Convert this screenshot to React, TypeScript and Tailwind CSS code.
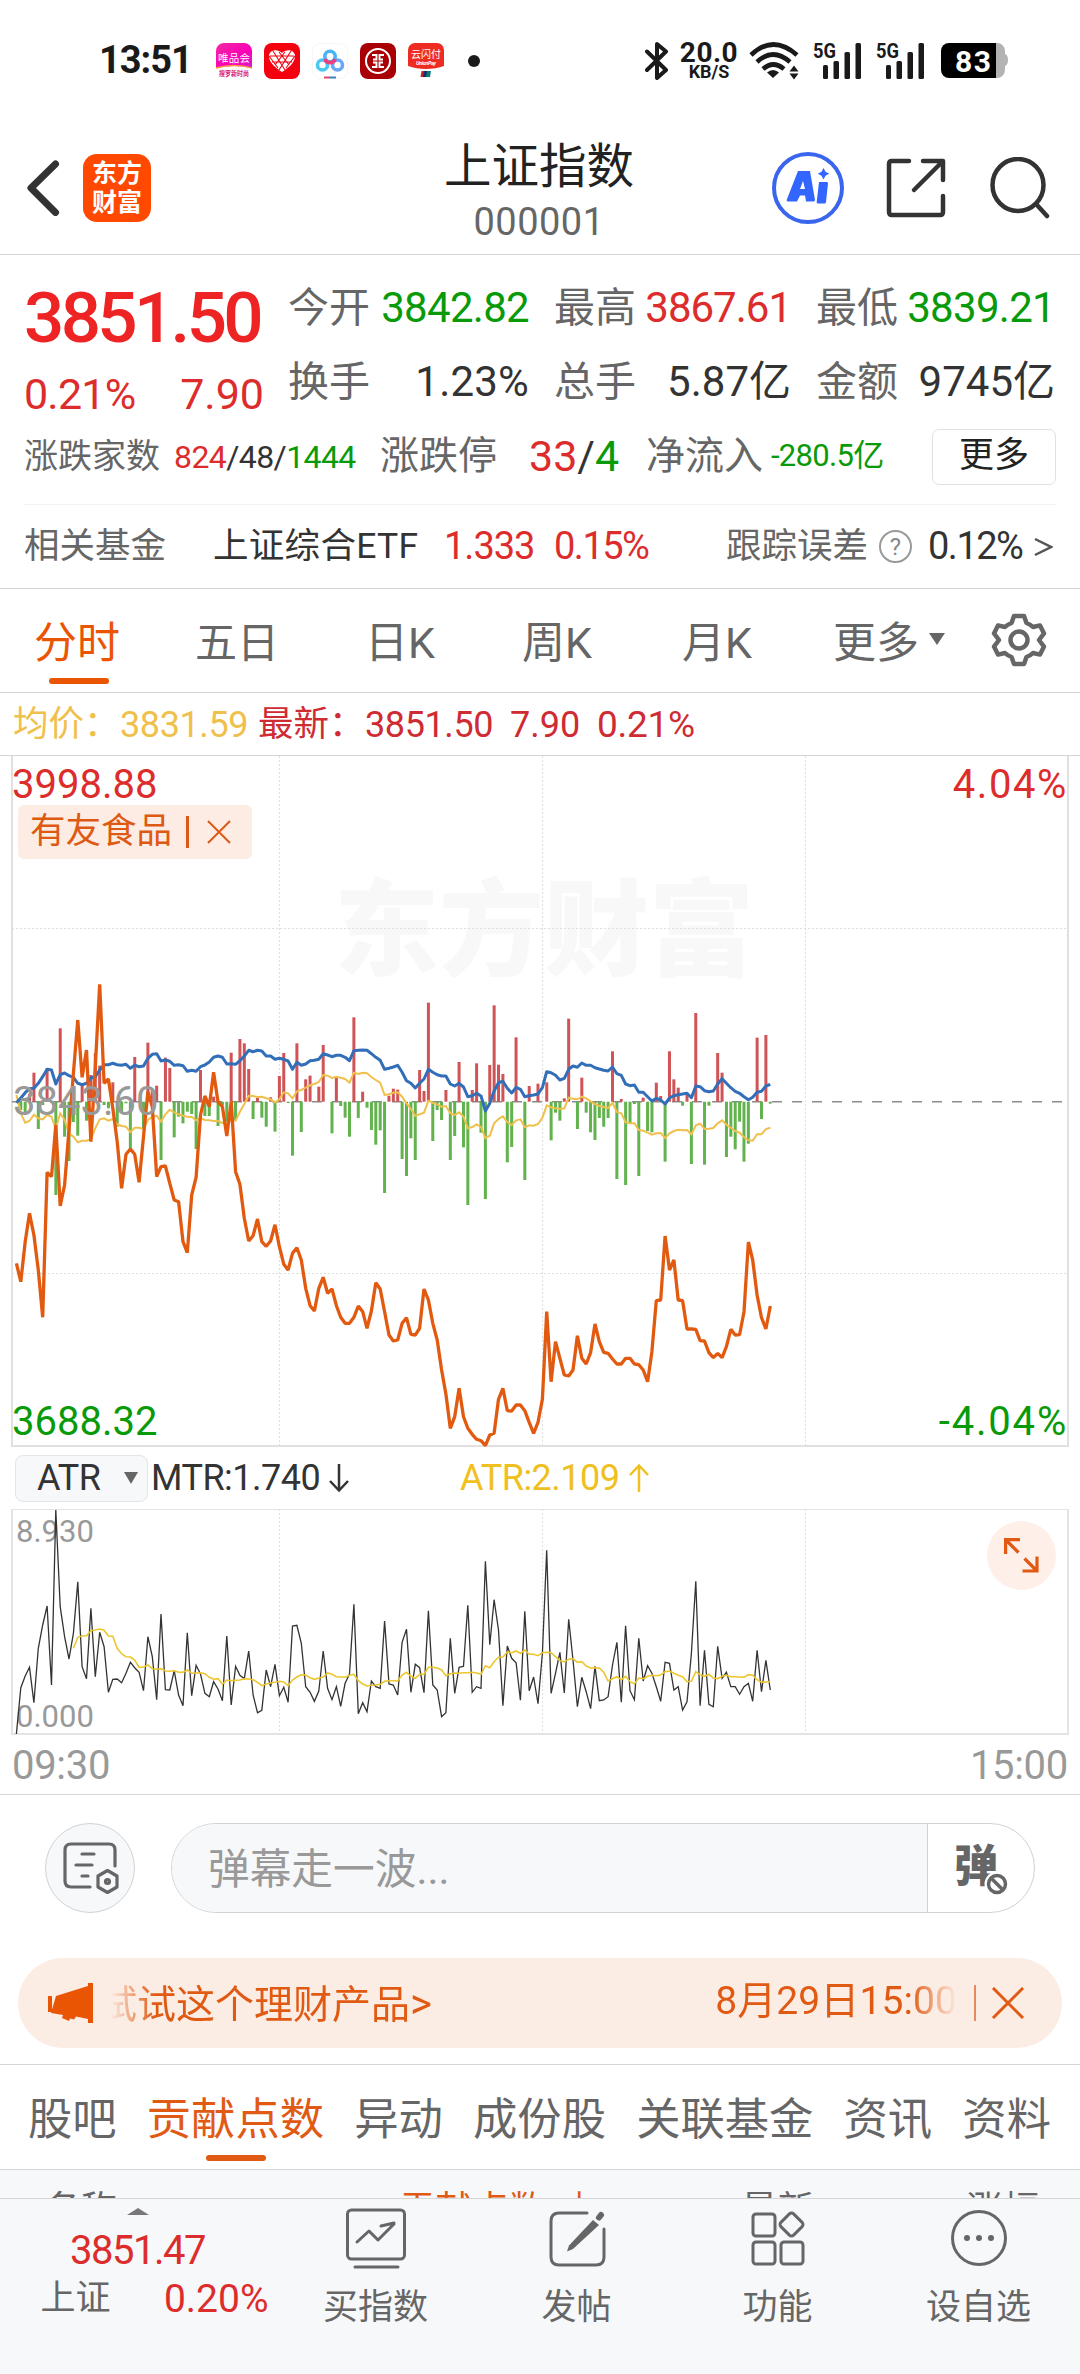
import { ReactNode } from 'react';
import clsx from 'clsx';

// One value per minute, in thirds of a pixel below the top of the plot band.
const PRICE = [
  970, 1025, 905, 820, 885, 990, 1132, 697, 710, 555, 798, 735, 570, 400, 240, 412, 330, 605, 380, 133,
  430, 417, 505, 605, 745, 643, 627, 643, 727, 590, 455, 500, 710, 680, 678, 730, 780, 785, 905, 938,
  765, 712, 525, 468, 500, 397, 485, 500, 588, 485, 695, 733, 835, 903, 887, 837, 905, 919, 903, 854,
  920, 973, 990, 940, 923, 960, 1045, 1097, 1113, 1045, 1012, 1060, 1047, 1097, 1132, 1150, 1150, 1132, 1098, 1115,
  1165, 1113, 1028, 1047, 1115, 1185, 1203, 1200, 1150, 1133, 1183, 1185, 1165, 1047, 1080, 1150, 1200, 1290, 1362, 1465,
  1430, 1345, 1430, 1465, 1483, 1498, 1502, 1517, 1485, 1480, 1378, 1345, 1412, 1413, 1395, 1395, 1412, 1447, 1480, 1447,
  1378, 1115, 1325, 1205, 1255, 1305, 1308, 1290, 1187, 1255, 1272, 1238, 1152, 1205, 1237, 1240, 1257, 1272, 1272, 1255,
  1255, 1272, 1274, 1290, 1325, 1235, 1082, 1080, 888, 990, 960, 1080, 1082, 1167, 1167, 1168, 1202, 1203, 1238, 1253,
  1240, 1253, 1220, 1168, 1185, 1184, 1115, 906, 960, 1065, 1133, 1167, 1098,
];

// Bars grow from 485: smaller is up (red), larger is down (green).
const BARS = [
  485, 510, 525, 462, 398, 567, 495, 385, 488, 765, 265, 590, 663, 546, 587, 437, 542, 405, 340, 377,
  495, 505, 427, 560, 513, 490, 625, 351, 485, 565, 308, 447, 437, 660, 353, 384, 592, 530, 550, 515,
  522, 627, 390, 528, 528, 470, 558, 495, 545, 338, 540, 297, 310, 387, 537, 473, 533, 560, 472, 575,
  408, 339, 489, 647, 310, 576, 418, 407, 485, 440, 315, 485, 580, 412, 498, 533, 590, 232, 534, 455,
  503, 570, 614, 571, 759, 467, 446, 449, 657, 708, 595, 660, 390, 453, 188, 603, 510, 540, 450, 660,
  588, 366, 622, 795, 450, 370, 578, 777, 375, 196, 374, 402, 667, 621, 292, 485, 720, 438, 485, 431,
  485, 427, 601, 518, 542, 475, 236, 485, 567, 413, 518, 577, 600, 534, 560, 534, 334, 717, 477, 735,
  550, 492, 708, 473, 573, 577, 428, 468, 665, 334, 418, 443, 497, 462, 672, 219, 485, 674, 497, 485,
  339, 398, 651, 590, 628, 545, 665, 611, 485, 293, 537, 285, 491,
];

const LATEST = [
  488, 474, 458, 446, 445, 430, 410, 388, 390, 432, 404, 399, 407, 412, 430, 434, 430, 414, 410, 390,
  374, 374, 370, 374, 376, 373, 385, 376, 380, 378, 355, 343, 341, 363, 360, 364, 376, 374, 377, 394,
  391, 394, 380, 375, 366, 352, 348, 352, 372, 371, 373, 362, 348, 331, 335, 331, 333, 348, 348, 358,
  355, 358, 363, 388, 367, 376, 372, 362, 361, 358, 341, 345, 350, 346, 346, 352, 362, 332, 331, 330,
  331, 341, 352, 361, 388, 385, 381, 376, 397, 422, 430, 444, 430, 417, 388, 397, 404, 408, 408, 432,
  438, 430, 441, 470, 467, 460, 468, 513, 490, 453, 428, 424, 445, 459, 442, 448, 470, 467, 465, 462,
  443, 395, 398, 406, 420, 415, 388, 378, 382, 369, 376, 376, 383, 387, 391, 393, 381, 401, 406, 432,
  437, 435, 457, 457, 470, 483, 475, 480, 492, 474, 467, 464, 462, 460, 473, 438, 440, 452, 455, 453,
  432, 416, 430, 443, 454, 460, 470, 479, 472, 457, 454, 438, 433,
];

const AVERAGE = [
  465, 520, 548, 543, 524, 535, 538, 525, 530, 567, 520, 540, 580, 590, 607, 602, 602, 598, 565, 538,
  535, 542, 537, 553, 558, 560, 577, 563, 563, 567, 540, 530, 527, 545, 523, 509, 517, 523, 527, 530,
  531, 541, 534, 540, 541, 543, 543, 549, 552, 540, 542, 515, 492, 467, 468, 471, 470, 475, 478, 487,
  478, 457, 460, 475, 454, 450, 443, 436, 432, 426, 405, 407, 414, 410, 413, 417, 428, 398, 402, 398,
  400, 411, 420, 428, 465, 463, 458, 457, 470, 490, 507, 527, 523, 518, 482, 488, 493, 500, 498, 520,
  525, 517, 530, 565, 561, 553, 561, 594, 587, 550, 537, 529, 546, 555, 541, 538, 562, 556, 557, 552,
  533, 496, 502, 505, 507, 505, 473, 476, 478, 470, 475, 484, 492, 498, 501, 504, 489, 516, 520, 547,
  550, 550, 570, 572, 578, 584, 580, 579, 594, 580, 573, 569, 571, 570, 583, 556, 551, 567, 566, 564,
  550, 541, 554, 563, 573, 578, 592, 600, 602, 583, 583, 567, 563,
];

const MTR = [
  882, 743, 708, 682, 788, 625, 555, 498, 735, 210, 500, 590, 657, 580, 425, 680, 716, 505, 710, 577,
  620, 757, 718, 717, 728, 700, 667, 683, 697, 752, 590, 650, 779, 522, 749, 750, 692, 765, 797, 578,
  767, 676, 702, 760, 770, 725, 747, 782, 588, 795, 679, 706, 716, 633, 765, 818, 811, 690, 740, 673,
  767, 742, 787, 558, 556, 610, 740, 757, 784, 753, 633, 745, 779, 740, 799, 730, 702, 493, 821, 788,
  815, 723, 740, 745, 543, 732, 735, 765, 607, 568, 757, 673, 683, 758, 512, 735, 750, 830, 818, 595,
  760, 682, 679, 496, 757, 740, 745, 364, 614, 479, 570, 797, 618, 655, 668, 781, 514, 752, 711, 791,
  640, 331, 760, 700, 637, 759, 538, 660, 800, 712, 755, 806, 679, 782, 780, 770, 675, 607, 787, 557,
  752, 779, 595, 723, 677, 700, 740, 784, 667, 670, 750, 740, 810, 785, 640, 424, 797, 631, 793, 800,
  619, 715, 697, 740, 740, 763, 740, 730, 784, 631, 755, 661, 750,
];

// Starts at minute 13, when the first average is available.
const ATR = [
  625, 592, 588, 587, 572, 570, 567, 571, 588, 589, 625, 641, 650, 651, 660, 682, 681, 675, 686, 688,
  686, 693, 694, 692, 697, 697, 690, 700, 699, 698, 701, 712, 718, 716, 732, 720, 722, 721, 720, 716,
  717, 719, 727, 737, 732, 729, 727, 724, 726, 737, 720, 711, 704, 705, 713, 718, 714, 711, 699, 703,
  710, 711, 712, 706, 703, 722, 732, 738, 736, 735, 733, 724, 722, 722, 723, 705, 697, 709, 715, 703,
  703, 682, 682, 684, 690, 707, 701, 699, 700, 698, 698, 697, 699, 703, 677, 683, 665, 652, 651, 636,
  638, 633, 640, 630, 643, 643, 647, 638, 637, 638, 650, 662, 665, 658, 656, 667, 665, 678, 684, 683,
  684, 697, 723, 716, 710, 719, 709, 725, 731, 714, 716, 709, 706, 707, 705, 695, 693, 700, 706, 710,
  725, 724, 695, 704, 709, 703, 714, 716, 709, 706, 710, 710, 711, 712, 704, 706, 719, 727, 726, 725,
];

const px = (i: number) => 4.4 + i * 4.383;

function toPoints(values: number[], offset: number, start = 0) {
  return values.map((v, i) => `${px(i + start).toFixed(1)},${(v / 3 + offset).toFixed(1)}`).join(' ');
}

function Stat({ label, value, color, tracking }: { label: string; value: string; color: string; tracking?: string }) {
  return (
    <div className="flex items-center justify-between whitespace-nowrap text-[41px]">
      <span className="pt-[3px] text-[#666]">{label}</span>
      <span className={clsx('pt-px text-[42px]', color, tracking)}>{value}</span>
    </div>
  );
}

function Signal() {
  return (
    <svg className="overflow-visible" width="50" height="36" viewBox="0 0 50 36" fill="#1a1a1a">
      <text x="0" y="15" fontSize="20" fontWeight="700" textLength="23" lengthAdjust="spacingAndGlyphs">5G</text>
      <rect x="10" y="22" width="5" height="14" rx="1.5" />
      <rect x="20.5" y="18" width="5.5" height="18" rx="1.5" />
      <rect x="31.5" y="9" width="5.5" height="27" rx="1.5" />
      <rect x="42.5" y="0" width="5.5" height="36" rx="1.5" />
    </svg>
  );
}

function StatusBar() {
  return (
    <div className="flex h-[121px] items-center pl-[99px] pr-[72px] text-[#1a1a1a]">
      <div className="w-[117px] text-[38px] font-bold tracking-[-1px]">13:51</div>
      <div className="flex items-center gap-3">
        <svg className="overflow-visible" width="36" height="36" viewBox="0 0 36 36">
          <defs>
            <linearGradient id="vip" x1="0" y1="0" x2="1" y2="1">
              <stop offset="0" stopColor="#f22aa0" />
              <stop offset="0.6" stopColor="#fb00b8" />
              <stop offset="1" stopColor="#d81bd0" />
            </linearGradient>
          </defs>
          <path d="M8 0h20a8 8 0 0 1 8 8v17Q18 21 0 25V8a8 8 0 0 1 8-8z" fill="url(#vip)" />
          <path d="M0 25Q18 20 36 25" fill="none" stroke="#ff9a3c" strokeWidth="1.5" />
          <text x="2" y="18.5" fontSize="10.5" fontWeight="400" fill="#fff" textLength="32">唯品会</text>
          <text x="3" y="33" fontSize="6.5" fontWeight="700" fill="#d6246e" textLength="30" lengthAdjust="spacingAndGlyphs">搜罗新时尚</text>
        </svg>
        <svg width="36" height="36" viewBox="0 0 36 36">
          <rect width="36" height="36" rx="8" fill="#f5000f" />
          <path d="M18 29C12 25 5 20 5 13c0-6 8-8 13-3 5-5 13-3 13 3 0 7-7 12-13 16z" fill="#fff" />
          <path d="M5 13l9 12M9 8l12 19M15 9l10 13M31 13l-9 12M27 8L15 27M21 9L11 22M6 13h24M8 19h20" stroke="#f5000f" strokeWidth="1.1" />
        </svg>
        <svg width="36" height="36" viewBox="0 0 36 36" fill="none" strokeWidth="3.6">
          <rect x="0.5" y="0.5" width="35" height="35" rx="8" stroke="#f6f6f6" strokeWidth="1" />
          <circle cx="10.5" cy="22" r="5" stroke="#4cc9f2" />
          <circle cx="25.5" cy="22" r="5" stroke="#6aa8f5" />
          <circle cx="18" cy="13.5" r="5.2" stroke="#49b4f5" />
          <path d="M13 16a5.2 5.2 0 0 0 10 0" stroke="#ee3f7c" />
          <path d="M12 34.5h6" stroke="#e8476a" strokeWidth="2" />
          <path d="M18 34.5h6" stroke="#3b83c8" strokeWidth="2" />
        </svg>
        <svg width="36" height="36" viewBox="0 0 36 36" fill="none" stroke="#fff">
          <rect width="36" height="36" rx="8" fill="#a90005" stroke="none" />
          <circle cx="18" cy="18" r="12" strokeWidth="2" />
          <path d="M12 12h4.5v4.5H13M12 24h4.500v-4.500H13M24 12h-4.500v4.500H23M24 24h-4.500v-4.500H23" strokeWidth="1.9" />
        </svg>
        <svg className="overflow-visible" width="36" height="36" viewBox="0 0 36 36">
          <path d="M7 0h22a7 7 0 0 1 7 7v16q-8 3-18 3T0 23V7a7 7 0 0 1 7-7z" fill="#ee2c24" />
          <text x="3" y="15" fontSize="10" fontWeight="400" fill="#fff" textLength="30">云闪付</text>
          <text x="8" y="22" fontSize="5.5" fontWeight="700" fontStyle="italic" fill="#fff" textLength="20">UnionPay</text>
          <path d="M13.5 28h4l-1 6h-4z" fill="#c8202c" />
          <path d="M16 28h4l-1 6h-4z" fill="#12306b" />
          <path d="M19 28h4l-1 6h-4z" fill="#0d7a78" />
        </svg>
      </div>
      <div className="ml-6 size-3 rounded-full bg-[#1a1a1a]" />

      <div className="ml-auto flex items-center">
        <svg width="24" height="38" viewBox="0 0 24 38" fill="none" stroke="#1a1a1a" strokeWidth="4" strokeLinejoin="round" strokeLinecap="round">
          <path d="M2 9.5L21 28 12 36V2l9 7.5L2 28" />
        </svg>
        <div className="ml-[10px] flex w-[60px] flex-col items-center font-bold">
          <span className="text-[28px] leading-[22px] tracking-[0.5px]">20.0</span>
          <span className="text-[18px] leading-[16px]">KB/S</span>
        </div>
        <svg className="ml-[10px]" width="52" height="38" viewBox="0 0 52 38" fill="none" stroke="#1a1a1a" strokeWidth="4.6">
          <path d="M2 13Q24-8 48 13" />
          <path d="M8 20Q24 5 41 20" />
          <path d="M14 27Q24 18 35 27" />
          <path d="M24 36l-6-5.5q6-5 12 0z" fill="#1a1a1a" stroke="none" />
          <path d="M40.5 29.5l4.5-6 4.5 6zM40.5 31.5l4.5 6 4.5-6z" fill="#1a1a1a" stroke="none" />
        </svg>
        <div className="ml-3 flex gap-[13px]">
          <Signal />
          <Signal />
        </div>
        <svg className="ml-[15px]" width="67" height="35" viewBox="0 0 67 35">
          <path d="M54 0h2a8 8 0 0 1 8 8v3q3 1 3 6t-3 6v4a8 8 0 0 1-8 8h-2z" fill="#b3b3b3" />
          <path d="M8 0h47v35H8a8 8 0 0 1-8-8V8a8 8 0 0 1 8-8z" fill="#000" />
          <text x="14" y="28.5" fontSize="30" fontWeight="700" fill="#fff" textLength="36">83</text>
        </svg>
      </div>
    </div>
  );
}

function Header() {
  return (
    <div className="flex h-[134px] items-center border-b border-[#d6d6d6] pl-[26px] pr-[30px]">
      <div className="flex w-[413px] items-center">
        <svg width="34" height="56" viewBox="0 0 34 56" fill="none" stroke="#333" strokeWidth="7" strokeLinecap="round" strokeLinejoin="round">
          <path d="M29.5 4L5 28l24.5 24.5" />
        </svg>
        <div className="ml-[23px] flex size-[68px] flex-col items-center justify-center rounded-[14px] bg-[#ff4800] text-[25px] font-bold leading-[29px] text-white">
          <span>东方</span>
          <span>财富</span>
        </div>
      </div>
      <div className="flex w-[200px] flex-col items-center">
        <div className="whitespace-nowrap pt-1 text-[47.5px] leading-[64px] text-[#222]">上证指数</div>
        <div className="text-[38px] leading-[46px] tracking-[0.5px] text-[#666]">000001</div>
      </div>
      <div className="ml-auto flex items-center">
        <svg width="72" height="74" viewBox="0 0 72 74">
          <circle cx="36" cy="37" r="34" fill="none" stroke="#3a66ee" strokeWidth="4" />
          <path d="M26 20h12l5 29q0 1.5-2 1.5h-7l-1-6h-5l-3 6h-9q-2 0-1-2.5zM31 30l-3 8h5z" fill="#3366ff" fillRule="evenodd" />
          <path d="M47 31h8q1 0 1 1.5L54 51q0 1.5-1.5 1.5h-6.500q-1.500 0-1.300-1.500z" fill="#3366ff" />
          <path d="M51.5 17l2 3.700 3.700 2-3.700 2-2 3.700-2-3.700-3.700-2 3.700-2z" fill="#3366ff" />
        </svg>
        <svg className="ml-[42px]" width="60" height="60" viewBox="0 0 60 60" fill="none" stroke="#333" strokeWidth="4.5" strokeLinecap="round" strokeLinejoin="round">
          <path d="M23 3H6q-3 0-3 3v48q0 3 3 3h48q3 0 3-3V38M37 3h20v19M56 4L28 32" />
        </svg>
        <svg className="ml-11" width="60" height="62" viewBox="0 0 60 62" fill="none" stroke="#333" strokeWidth="4.5" strokeLinecap="round">
          <ellipse cx="28" cy="28" rx="25.5" ry="26" />
          <path d="M47 48l10 11" />
        </svg>
      </div>
    </div>
  );
}

function Quote() {
  return (
    <div className="h-[334px] border-b border-[#d6d6d6] px-6 pt-[15px]">
      <div className="flex h-[148px]">
        <div className="w-[264px] text-[#dc2c2c]">
          <div className="h-[96px] text-[71px] font-medium leading-[96px] tracking-[-3.7px] text-[#ee2424]">3851.50</div>
          <div className="flex w-[240px] justify-between text-[43px] leading-[56px]">
            <span className="tracking-[-0.8px]">0.21%</span>
            <span>7.90</span>
          </div>
        </div>
        <div className="grid grid-cols-[241px_237px_239px] grid-rows-2 gap-x-[25px]">
          <Stat label="今开" value="3842.82" color="text-[#099a09]" tracking="tracking-[-0.7px]" />
          <Stat label="最高" value="3867.61" color="text-[#dc2c2c]" tracking="tracking-[-1px]" />
          <Stat label="最低" value="3839.21" color="text-[#099a09]" tracking="tracking-[-0.7px]" />
          <Stat label="换手" value="1.23%" color="text-[#333]" tracking="tracking-[0.2px]" />
          <Stat label="总手" value="5.87亿" color="text-[#333]" />
          <Stat label="金额" value="9745亿" color="text-[#333]" />
        </div>
      </div>
      <div className="flex h-[87px] items-center whitespace-nowrap border-b border-[#f2f2f2] pb-[9px] text-[39px] text-[#666]">
        <div className="w-[150px] text-[34px]">涨跌家数</div>
        <div className="w-[206px] text-[32px] tracking-[-0.6px] text-[#333]">
          <span className="text-[#dc2c2c]">824</span>/48/<span className="text-[#099a09]">1444</span>
        </div>
        <div className="w-[149px]">涨跌停</div>
        <div className="w-[117px] text-[43px] text-[#333]">
          <span className="text-[#dc2c2c]">33</span>/<span className="text-[#099a09]">4</span>
        </div>
        <div className="w-[125px]">净流入</div>
        <div className="text-[31px] tracking-[-0.7px] text-[#099a09]">-280.5亿</div>
        <div className="ml-auto flex h-[56px] w-[124px] items-center justify-center rounded-[7px] border border-[#dfe2e5] text-[35px] text-[#222]">更多</div>
      </div>
      <div className="flex h-[81px] items-center whitespace-nowrap pt-0.5 text-[35.5px] text-[#333]">
        <div className="w-[189px] text-[#666]">相关基金</div>
        <div className="w-[231px] tracking-[0.3px]">上证综合ETF</div>
        <div className="w-[110px] text-[38px] tracking-[-1px] text-[#dc2c2c]">1.333</div>
        <div className="w-[172px] text-[38px] tracking-[-1.5px] text-[#dc2c2c]">0.15%</div>
        <div className="text-[#666]">跟踪误差</div>
        <div className="ml-[11px] flex size-[33px] items-center justify-center rounded-full border-[2.5px] border-[#999] text-[24px] text-[#888]">?</div>
        <div className="ml-4 text-[38px] tracking-[-1.5px]">0.12%</div>
        <svg className="ml-auto mr-[3px]" width="19" height="20" viewBox="0 0 19 20" fill="none" stroke="#555" strokeWidth="2.5">
          <path d="M1 2l16 8-16 8" />
        </svg>
      </div>
    </div>
  );
}

function PeriodTabs() {
  return (
    <div className="flex h-[104px] items-center whitespace-nowrap border-b border-[#d6d6d6] pl-[34px] text-[43px] text-[#666]">
      <div className="relative w-[161px] pt-[6px] text-[#ea5504]">
        分时
        <div className="absolute -bottom-[8px] left-[15px] h-[6px] w-[60px] rounded-full bg-[#ea5504]" />
      </div>
      <div className="w-[170px] pt-[6px] text-[42px]">五日</div>
      <div className="w-[157px] pt-[6px]">日K</div>
      <div className="w-[160px] pt-[6px]">周K</div>
      <div className="w-[151px] pt-[6px]">月K</div>
      <div className="w-[96px] pt-[6px]">更多</div>
      <div className="mb-1 h-0 w-0 border-x-[8px] border-t-[12px] border-x-transparent border-t-[#666]" />
      <svg className="mb-0.5 ml-[46px]" width="56" height="54" viewBox="0 0 56 54" fill="none" stroke="#666" strokeWidth="4.5" strokeLinejoin="round">
        <path d="M23 3h10l2.500 7q4 1.500 6.500 4l7-1.600 4 8-5 6.600 5 6.600-4 8-7-1.600q-2.500 2.500-6.500 4L33 51H23l-2.500-7q-4-1.500-6.500-4l-7 1.600-4-8L8 27l-5-6.600 4-8 7 1.600q2.500-2.500 6.500-4z" />
        <circle cx="28" cy="27" r="8.5" />
      </svg>
    </div>
  );
}

function Grid({ height, lines }: { height: number; lines: number[] }) {
  return (
    <g stroke="#dedede" strokeWidth="1" strokeDasharray="2 2">
      {[267.5, 530.5, 793.5].map((x) => (
        <line key={x} x1={x} x2={x} y1="0" y2={height} />
      ))}
      {lines.map((y) => (
        <line key={y} x1="0" x2="1056" y1={y} y2={y} />
      ))}
    </g>
  );
}

function MinuteChart() {
  const zero = 345.7;
  return (
    <div className="relative mx-[11px] h-[691px] border-x-2 border-b-2 border-[#e0e0e0] text-[40px] leading-none">
      <div className="absolute left-[321px] top-[123px] whitespace-nowrap text-[105px] font-black text-[#f8f8f8]">东方财富</div>
      <svg className="absolute -left-px top-0 overflow-visible" width="1056" height="690" viewBox="0 0 1056 690" fill="none">
        <Grid height={690} lines={[172.5, 517.5]} />
        <line x1="0" x2="1056" y1={zero} y2={zero} stroke="#8c8c8c" strokeWidth="1.5" strokeDasharray="10 10" />
        {BARS.map((v, i) => {
          const y = v / 3 + 184;
          return (
            <rect
              key={i}
              x={px(i) - 1.5}
              width="3"
              y={Math.min(y, zero)}
              height={Math.abs(y - zero)}
              fill={y < zero ? '#d05355' : '#62b24e'}
            />
          );
        })}
        <polyline points={toPoints(AVERAGE, 184)} stroke="#f0c04c" strokeWidth="2" />
        <polyline points={toPoints(LATEST, 184)} stroke="#326fb8" strokeWidth="3" strokeLinejoin="round" />
        <polyline points={toPoints(PRICE, 184)} stroke="#e25a10" strokeWidth="3.3" strokeLinejoin="bevel" />
      </svg>
      <div className="absolute -left-px top-[9px] text-[#dc2c2c]">3998.88</div>
      <div className="absolute -right-px top-[9px] tracking-[1.6px] text-[#dc2c2c]">4.04%</div>
      <div className="absolute left-[5px] top-[49px] flex h-[54px] w-[234px] items-center rounded-md bg-[#fdece3] pl-3 text-[35.5px] text-[#dd5a14]">
        <span className="w-[156px] whitespace-nowrap">有友食品</span>
        <span className="h-8 w-[3px] bg-[#dd5a14]" />
        <svg className="ml-[18px]" width="24" height="24" viewBox="0 0 24 24" stroke="#dd5a14" strokeWidth="2">
          <path d="M1 1l22 22M23 1L1 23" />
        </svg>
      </div>
      <div className="absolute left-0 top-[326px] text-[#999]">3843.60</div>
      <div className="absolute -left-px top-[646px] text-[#099a09]">3688.32</div>
      <div className="absolute -right-px top-[646px] tracking-[1.8px] text-[#099a09]">-4.04%</div>
    </div>
  );
}

function Arrow({ color, up }: { color: string; up?: boolean }) {
  return (
    <svg className={clsx('ml-2', up && 'rotate-180')} width="22" height="30" viewBox="0 0 22 30" fill="none" stroke={color} strokeWidth="2.5">
      <path d="M11 1v26M2 18l9 9.500 9-9.500" />
    </svg>
  );
}

function AtrChart() {
  return (
    <>
      <div className="flex h-[62px] items-center pl-[15px] text-[36px] tracking-[-0.5px] text-[#333]">
        <div className="flex h-[47px] w-[133px] items-center rounded-lg border border-[#e3e5e9] bg-[#f7f8fa] pl-[21px]">
          ATR
          <span className="ml-auto mr-[9px] h-0 w-0 border-x-[7.5px] border-t-[12px] border-x-transparent border-t-[#666]" />
        </div>
        <div className="flex w-[312px] items-center pl-[3px]">
          MTR:1.740
          <Arrow color="#333" />
        </div>
        <div className="flex items-center text-[#f0c020]">
          ATR:2.109
          <Arrow color="#f0c020" up />
        </div>
      </div>
      <div className="relative mx-[11px] h-[226px] border-2 border-t border-[#e4e4e4] text-[31px] leading-none text-[#999]">
        <div className="absolute left-[3px] top-[6px]">8.930</div>
        <div className="absolute left-[3px] top-[191px]">0.000</div>
        <svg className="absolute -left-px -top-px overflow-visible" width="1056" height="225" viewBox="0 0 1056 225" fill="none">
          <Grid height={225} lines={[]} />
          <polyline points={toPoints(MTR, -69)} stroke="#333" strokeWidth="1.3" />
          <polyline points={toPoints(ATR, -69, 13)} stroke="#ecc62c" strokeWidth="1.6" />
        </svg>
        <div className="absolute right-[11px] top-[11px] flex size-[69px] items-center justify-center rounded-full bg-[#fef0e9]">
          <svg width="35" height="35" viewBox="0 0 35 35" fill="none" stroke="#e05a14" strokeWidth="3.2">
            <path d="M1.600 16V1.600H16M2 2l12.500 12.500M33 18.500V33H18.500M33 33L20.500 20.500" />
          </svg>
        </div>
      </div>
      <div className="flex h-[60px] items-center justify-between border-b border-[#d6d6d6] px-3 pt-0.5 text-[40px] tracking-[-0.3px] text-[#999]">
        <span>09:30</span>
        <span>15:00</span>
      </div>
    </>
  );
}

function Danmu() {
  return (
    <div className="flex items-center pl-[45px] pt-7">
      <div className="flex size-[90px] items-center justify-center rounded-full border border-[#cfd2d6] bg-[#f7f8fa]">
        <svg width="58" height="54" viewBox="0 0 58 54" fill="none" stroke="#666" strokeWidth="3.2" strokeLinecap="round">
          <path d="M29 46H10q-6 0-6-6V9q0-6 6-6h38q6 0 6 6v16M21 13h12M15 24h16M21 35h6" />
          <path d="M46.500 29.500l9.500 5.500v11l-9.500 5.500L37 46V35z" strokeLinejoin="round" />
          <circle cx="46.5" cy="40.5" r="2" />
        </svg>
      </div>
      <div className="ml-9 flex h-[90px] w-[864px] overflow-hidden rounded-full border border-[#cfd2d6]">
        <div className="flex-1 border-r border-[#cfd2d6] bg-[#f7f8fa] pl-9 pt-0.5 text-[41.7px] leading-[88px] text-[#999]">弹幕走一波...</div>
        <div className="relative w-[106px] pl-[26px] text-[44px] font-black leading-[87px] text-[#666]">
          弹
          <svg className="absolute left-[56px] top-[47px]" width="26" height="26" viewBox="0 0 26 26" fill="none" stroke="#666" strokeWidth="3.5">
            <circle cx="13" cy="13" r="11.5" fill="#fff" stroke="#fff" strokeWidth="2" />
            <circle cx="13" cy="13" r="8.5" />
            <path d="M8 8l10 10" />
          </svg>
        </div>
      </div>
    </div>
  );
}

function Banner() {
  return (
    <div className="mx-[18px] mt-[45px] flex h-[90px] items-center rounded-full bg-[#fcede4] pl-[30px] text-[39px] text-[#e05a14]">
      <svg width="46" height="40" viewBox="0 0 46 40" fill="#ea5504">
        <path d="M0 13h4v16H0zM8 13L40 3V0h5v40h-5v-4l-12-2.500-2 3-4-1-1 2.500-7-3 1-3-12-2z" />
      </svg>
      <div className="ml-4 flex w-[847px] justify-between overflow-hidden whitespace-nowrap [mask-image:linear-gradient(to_right,transparent,black_45px,black_800px,transparent)]">
        <span className="-ml-3">
          试试这个理财产品<span className="text-[42px]">&gt;</span>
        </span>
        <span className="tracking-[0.1px]">8月29日15:00</span>
      </div>
      <div className="ml-[17px] h-9 w-[2px] bg-[#e58a5c]" />
      <svg className="ml-[15px]" width="34" height="32" viewBox="0 0 34 32" stroke="#e05a14" strokeWidth="3">
        <path d="M2 1l30 30M32 1L2 31" />
      </svg>
    </div>
  );
}

const sections = ['股吧', '贡献点数', '异动', '成份股', '关联基金', '资讯', '资料'];

function Sections() {
  return (
    <>
      <div className="mt-4 flex h-[106px] items-center justify-between whitespace-nowrap border-y border-[#d6d6d6] pl-[28px] pr-[29px] text-[44.3px] text-[#666]">
        {sections.map((name) => (
          <div key={name} className={clsx('relative pt-[6px]', name === '贡献点数' && 'text-[#e05a14]')}>
            {name}
            {name === '贡献点数' && (
              <div className="absolute -bottom-[8px] left-[59px] h-[6px] w-[60px] rounded-full bg-[#e05a14]" />
            )}
          </div>
        ))}
      </div>
      <div className="flex h-[28px] items-start overflow-hidden whitespace-nowrap bg-[#f7f8fa] pl-[44px] pt-[20px] text-[36.5px] leading-[40px] text-[#666]">
        <div className="w-[355px]">名称</div>
        <div className="w-[342px] text-[#e05a14]">贡献点数<span className="ml-4">↓</span></div>
        <div className="w-[225px]">最新</div>
        <div>涨幅</div>
      </div>
    </>
  );
}

function BarItem({ label, children }: { label: string; children: ReactNode }) {
  return (
    <div className="flex w-[201px] flex-col items-center">
      <div className="flex h-[80px] items-center">{children}</div>
      <div className="pt-[5px] text-[35px] leading-[48px]">{label}</div>
    </div>
  );
}

function BottomBar() {
  return (
    <div className="flex h-[176px] whitespace-nowrap border-t border-[#d6d6d6] bg-[#f7f8fa] text-[#666]">
      <div className="flex w-[275px] flex-col items-center pt-[9px]">
        <div className="h-0 w-0 border-x-[11px] border-b-[7px] border-x-transparent border-b-[#77777c]" />
        <div className="mt-[12px] text-[40px] leading-[48px] tracking-[-1.5px] text-[#dc2c2c]">3851.47</div>
        <div className="ml-[34px] flex w-[228px] items-center justify-between text-[35px] leading-[48px]">
          <span>上证</span>
          <span className="text-[39px] text-[#dc2c2c]">0.20%</span>
        </div>
      </div>
      <BarItem label="买指数">
        <svg width="62" height="66" viewBox="0 0 62 66" fill="none" stroke="#666" strokeWidth="3" strokeLinecap="round" strokeLinejoin="round">
          <rect x="2.5" y="4" width="57" height="49" rx="4" />
          <path d="M12 36l12-11 9 9 16-16M36 20l13-3M10 61h43" />
        </svg>
      </BarItem>
      <BarItem label="发帖">
        <svg width="58" height="62" viewBox="0 0 58 62" fill="none" stroke="#666" strokeWidth="3" strokeLinecap="round">
          <path d="M39 5H11Q3 5 3 13v36q0 8 8 8h37q8 0 8-8V21" />
          <path d="M45 12l6 5-26 24-6 2.500 2-6z" fill="#666" stroke="none" />
          <path d="M51 9.500l2-2.500" strokeWidth="6" />
        </svg>
      </BarItem>
      <BarItem label="功能">
        <svg width="56" height="58" viewBox="0 0 56 58" fill="none" stroke="#666" strokeWidth="3">
          <rect x="3" y="4" width="22" height="22" rx="3" />
          <rect x="3" y="32" width="22" height="22" rx="3" />
          <rect x="31" y="32" width="22" height="22" rx="3" />
          <rect x="32.5" y="5.5" width="18" height="18" rx="3" transform="rotate(45 41.500 14.500)" />
        </svg>
      </BarItem>
      <BarItem label="设自选">
        <svg width="58" height="60" viewBox="0 0 58 60" fill="#666">
          <circle cx="29" cy="29" r="26.5" fill="none" stroke="#666" strokeWidth="3" />
          <circle cx="17" cy="29" r="3" />
          <circle cx="29" cy="29" r="3" />
          <circle cx="41" cy="29" r="3" />
        </svg>
      </BarItem>
    </div>
  );
}

export default function App() {
  return (
    <div className="h-[2374px] w-[1080px] overflow-hidden bg-white font-['Roboto','Noto_Sans_CJK_SC',sans-serif]">
      <StatusBar />
      <Header />
      <Quote />
      <PeriodTabs />
      <div className="flex h-[63px] items-center whitespace-nowrap border-b border-[#d6d6d6] pl-[13px] pt-0.5 text-[35.5px] text-[#cf2b33]">
        <div className="w-[107px] text-[#f0c04c]">均价：</div>
        <div className="w-[138px] text-[36px] tracking-[-0.4px] text-[#f0c04c]">3831.59</div>
        <div className="w-[107px]">最新：</div>
        <div className="w-[145px] text-[36px] tracking-[-0.4px]">3851.50</div>
        <div className="w-[87px] text-[36px]">7.90</div>
        <div className="text-[37px] tracking-[-0.3px]">0.21%</div>
      </div>
      <MinuteChart />
      <AtrChart />
      <Danmu />
      <Banner />
      <Sections />
      <BottomBar />
    </div>
  );
}
